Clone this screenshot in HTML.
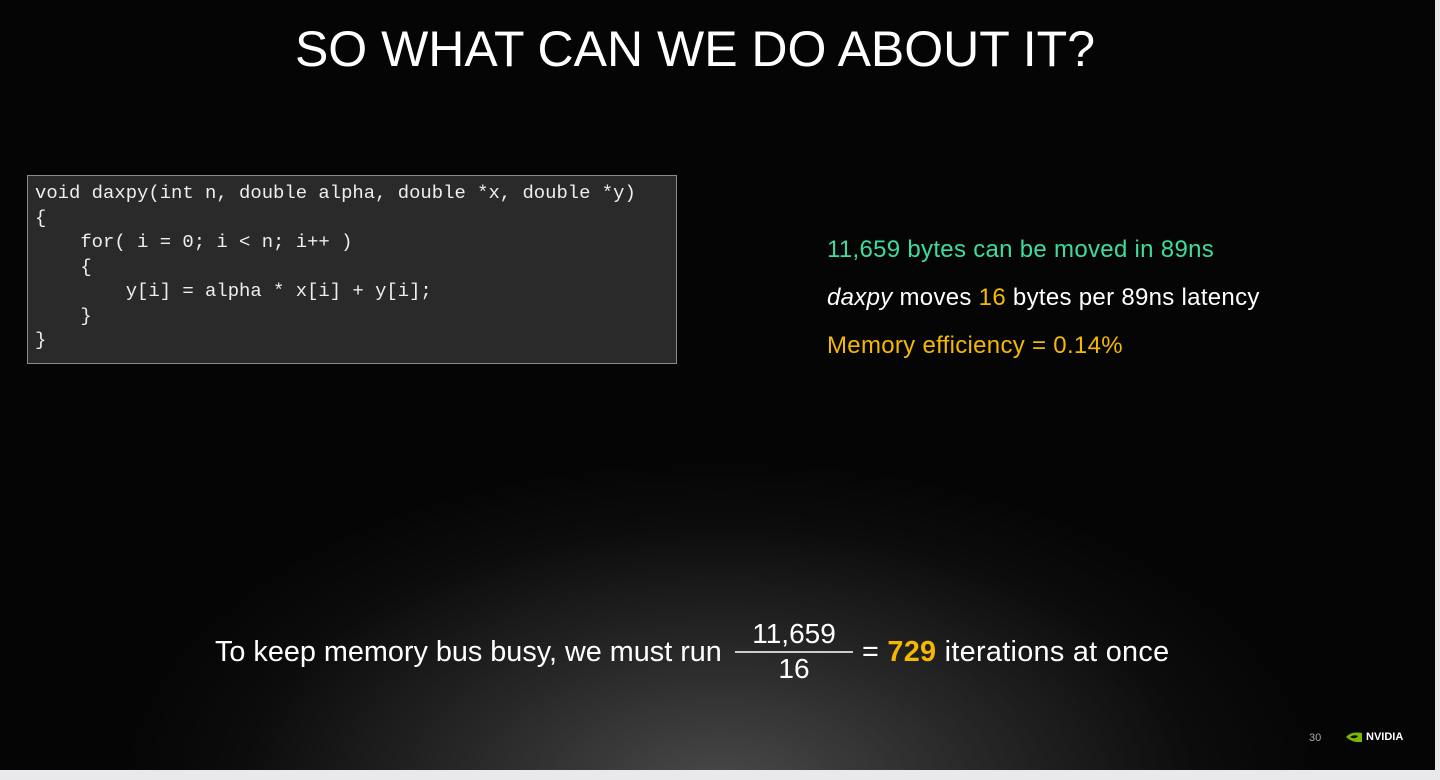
<!DOCTYPE html>
<html><head><style>
body{margin:0;width:1440px;height:780px;background:#e9e9ec;overflow:hidden;font-family:"Liberation Sans","DejaVu Sans",sans-serif}
#s{position:absolute;left:0;top:0;width:1435px;height:770px;background:radial-gradient(ellipse 600px 330px at 720px 790px,#4a4a4a 0%,#262626 45%,#0c0c0c 80%,#050505 100%);overflow:hidden}
.t{position:absolute;top:20px;left:0;width:1390px;text-align:center;color:#fff;font-size:50px}
.code{position:absolute;left:27px;top:175px;width:650px;height:189px;background:#2a2a2a;border:1px solid #8a8a8a;box-sizing:border-box}
.code pre{margin:0;position:absolute;left:7px;top:5px;font-family:"Liberation Mono",monospace;font-size:18.9px;line-height:24.5px;color:#eee}
.r{position:absolute;left:827px;font-size:24px;color:#fff;letter-spacing:0.3px}
.bot{position:absolute;top:636px;font-size:28.8px;color:#fff;letter-spacing:0.3px}
</style></head><body><div id="s">
<div class="t">SO WHAT CAN WE DO ABOUT IT?</div>
<div class="code"><pre>void daxpy(int n, double alpha, double *x, double *y)
{
    for( i = 0; i &lt; n; i++ )
    {
        y[i] = alpha * x[i] + y[i];
    }
}</pre></div>
<div class="r" style="top:236px;color:#3ddc9c">11,659 bytes can be moved in 89ns</div>
<div class="r" style="top:284px"><i>daxpy</i> moves <span style="color:#f5b800">16</span> bytes per 89ns latency</div>
<div class="r" style="top:332px;color:#f5b800">Memory efficiency = 0.14%</div>
<div class="bot" style="left:215px;letter-spacing:0">To keep memory bus busy, we must run</div>
<div style="position:absolute;left:735px;top:619px;width:118px;text-align:center;color:#fff;font-size:28px">
<div style="border-bottom:2px solid #ccc;padding-bottom:2px;line-height:30px">11,659</div><div style="line-height:32px">16</div></div>
<div class="bot" style="left:862px">= <b style="color:#f5b800">729</b> iterations at once</div>
<div style="position:absolute;left:1309px;top:732px;font-size:11px;color:#aaa">30</div>
<div style="position:absolute;left:1345px;top:731px;display:flex;align-items:center;gap:3px">
<svg width="18" height="12" viewBox="0 0 18 12"><path d="M1 6 Q6 0 17 2 L17 11 Q7 12 1 6Z" fill="#76b900"/><path d="M5 6 Q9 3 13 5 Q10 9 5 6Z" fill="#000"/></svg>
<span style="color:#fff;font-size:11px;font-weight:bold">NVIDIA</span></div>
</div></body></html>
